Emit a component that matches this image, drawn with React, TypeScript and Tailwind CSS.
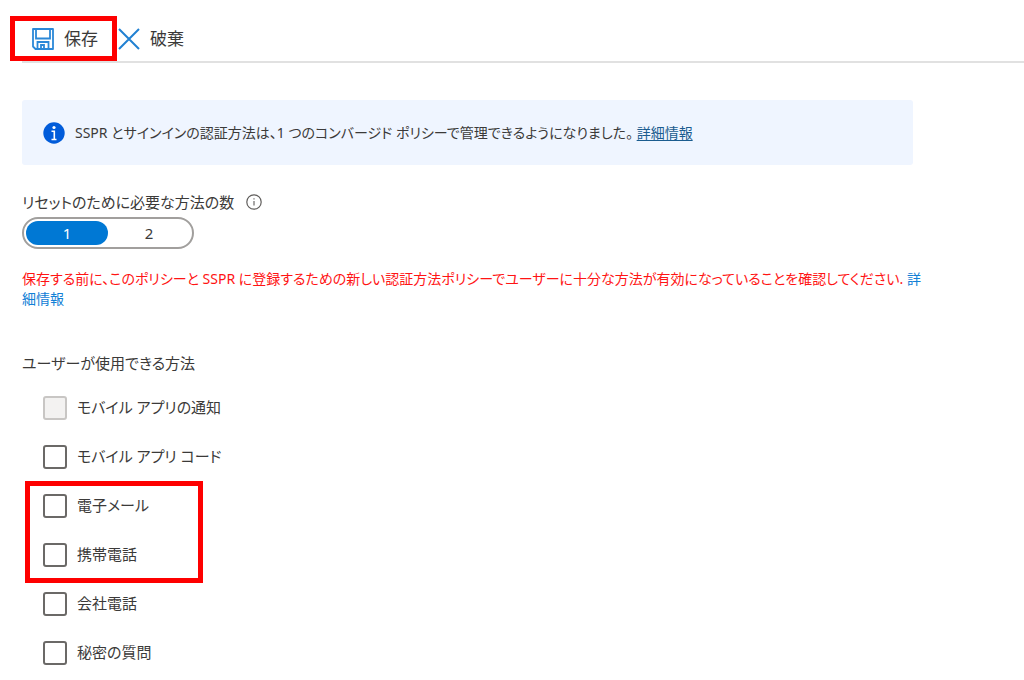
import { useState } from "react";

type Method = { id: string; label: string; disabled?: boolean };

const appMethods: Method[] = [
  { id: "app-notification", label: "モバイル アプリの通知", disabled: true },
  { id: "app-code", label: "モバイル アプリ コード" },
];
const contactMethods: Method[] = [
  { id: "email", label: "電子メール" },
  { id: "mobile-phone", label: "携帯電話" },
];
const otherMethods: Method[] = [
  { id: "office-phone", label: "会社電話" },
  { id: "security-questions", label: "秘密の質問" },
];

function SaveIcon() {
  return (
    <svg className="size-[22px]" viewBox="0 0 22 22" fill="none" stroke="#2b88d8" strokeWidth="1.8" aria-hidden="true">
      <path d="M1 1h20v20H3.500L1 18.500z" strokeLinejoin="round" />
      <path d="M4 1v9.500h14V1" />
      <path d="M5.500 21v-7h11v7" />
      <path d="M9 21v-4h3v4" />
    </svg>
  );
}

function DiscardIcon() {
  return (
    <svg className="size-[22px]" viewBox="0 0 22 22" fill="none" stroke="#2181d2" strokeWidth="2" aria-hidden="true">
      <path d="M1 1l20 20M21 1L1 21" />
    </svg>
  );
}

function InfoBadge() {
  return (
    <svg className="size-[22px] shrink-0" viewBox="0 0 22 22" aria-hidden="true">
      <circle cx="11" cy="11" r="10.700" fill="#015cda" />
      <circle cx="11" cy="5.500" r="1.600" fill="#fff" />
      <path d="M8.500 9.200h2.800v8M8.500 17.500h5" stroke="#fff" strokeWidth="1.600" fill="none" />
    </svg>
  );
}

function InfoOutline() {
  return (
    <svg className="size-4" viewBox="0 0 16 16" fill="none" stroke="#605e5c" aria-hidden="true">
      <circle cx="8" cy="8" r="7.200" strokeWidth="1.200" />
      <path d="M8 7v4.500M8 4.300v1.300" strokeWidth="1.100" />
    </svg>
  );
}

function MethodRow({ method }: { method: Method }) {
  return (
    <li className="flex h-[25px] items-center gap-2.5">
      <input
        id={method.id}
        type="checkbox"
        disabled={method.disabled}
        className="size-6 shrink-0 appearance-none rounded-[3px] border-2 border-[#6b6967] bg-white checked:bg-[#0078d4] disabled:border-[#c8c6c4] disabled:bg-[#f3f2f1]"
      />
      <label htmlFor={method.id} className="pb-0.5">
        {method.label}
      </label>
    </li>
  );
}

export default function App() {
  const [count, setCount] = useState(1);

  return (
    <div className="bg-white pb-4 pl-[22px] font-['Noto_Sans','Noto_Sans_CJK_JP',sans-serif] text-[15px] leading-6 text-[#3b3a39] [font-feature-settings:'palt']">
      <header className="flex h-[63px] items-center border-b-2 border-[#e1e1e1] pt-4 text-[17px]">
        <div className="relative">
          <button type="button" className="flex h-11 items-center gap-2.5 pr-5 pl-2.5">
            <SaveIcon />
            保存
          </button>
          <span className="pointer-events-none absolute -top-px right-px bottom-0 -left-3 border-5 border-[#fe0000]" />
        </div>
        <button type="button" className="flex h-11 items-center gap-2.5">
          <DiscardIcon />
          破棄
        </button>
      </header>

      <main className="mr-[111px]">
        <section className="mt-[37px] flex min-h-[65px] items-center gap-2.5 rounded-[3px] bg-[#eff5ff] px-[21px] text-sm">
          <InfoBadge />
          <p>
            SSPR とサインインの認証方法は、1 つのコンバージド ポリシーで管理できるようになりました。{" "}
            <a href="#converged" className="text-[#1a5c8f] underline decoration-1 underline-offset-2">
              詳細情報
            </a>
          </p>
        </section>

        <fieldset className="mt-[25px]">
          <legend className="flex items-center gap-3">
            リセットのために必要な方法の数
            <InfoOutline />
          </legend>
          <div className="mt-[3px] flex h-8 w-[172px] rounded-full border-2 border-[#a19f9d] p-0.5">
            {[1, 2].map((n) => (
              <label key={n} className="flex-1">
                <input
                  type="radio"
                  name="method-count"
                  checked={count === n}
                  onChange={() => setCount(n)}
                  className="peer sr-only"
                />
                <span className="flex h-6 items-center justify-center rounded-full peer-checked:bg-[#0078d4] peer-checked:text-white">
                  {n}
                </span>
              </label>
            ))}
          </div>
        </fieldset>

        <p className="mt-5 -mr-5 text-sm leading-5 text-[#ff1414]">
          保存する前に、このポリシーと SSPR に登録するための新しい認証方法ポリシーでユーザーに十分な方法が有効になっていることを確認してください.{" "}
          <a href="#policy" className="text-[#1280d6]">
            詳細情報
          </a>
        </p>

        <h2 className="mt-[42px]">ユーザーが使用できる方法</h2>
        <div className="mt-5 ml-[21px] flex flex-col items-start gap-6">
          <ul className="flex flex-col gap-6">
            {appMethods.map((m) => (
              <MethodRow key={m.id} method={m} />
            ))}
          </ul>
          <div className="relative">
            <ul className="flex flex-col gap-6">
              {contactMethods.map((m) => (
                <MethodRow key={m.id} method={m} />
              ))}
            </ul>
            <span className="pointer-events-none absolute -top-3 -bottom-4 -left-[18px] w-[178px] border-5 border-[#fe0000]" />
          </div>
          <ul className="flex flex-col gap-6">
            {otherMethods.map((m) => (
              <MethodRow key={m.id} method={m} />
            ))}
          </ul>
        </div>
      </main>
    </div>
  );
}
